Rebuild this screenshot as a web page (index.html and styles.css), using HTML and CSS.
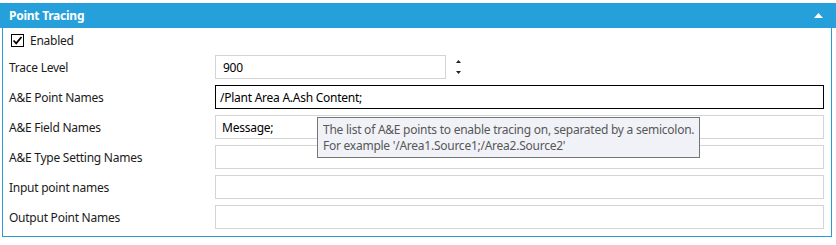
FILE: index.html
```html
<!DOCTYPE html>
<html>
<head>
<meta charset="utf-8">
<link rel="stylesheet" href="styles.css">
</head>
<body>
<div class="panel">
  <div class="panel-header">
    <span class="panel-title">Point Tracing</span>
    <svg class="collapse" width="9" height="5" viewBox="0 0 9 5"><path d="M0 5 L4.5 0 L9 5 Z" fill="#ffffff"/></svg>
  </div>
  <div class="panel-body">
    <label class="check-row">
      <span class="checkbox"><svg width="11" height="11" viewBox="0 0 11 11"><path d="M1.5 5.5 L4.2 8.3 L9.5 2" fill="none" stroke="#000" stroke-width="1.8"/></svg></span>
      <span class="check-label">Enabled</span>
    </label>
    <div class="form">
      <div class="label">Trace Level</div>
      <div class="field-wrap">
        <div class="field short">900</div>
        <div class="spinner">
          <svg width="5" height="3" viewBox="0 0 5 3"><path d="M0 3 L2.5 0 L5 3 Z" fill="#222"/></svg>
          <svg width="5" height="3" viewBox="0 0 5 3"><path d="M0 0 L2.5 3 L5 0 Z" fill="#222"/></svg>
        </div>
      </div>
      <div class="label">A&amp;E Point Names</div>
      <div class="field focused">/Plant Area A.Ash Content;</div>
      <div class="label">A&amp;E Field Names</div>
      <div class="field">Message;</div>
      <div class="label">A&amp;E Type Setting Names</div>
      <div class="field"></div>
      <div class="label">Input point names</div>
      <div class="field"></div>
      <div class="label">Output Point Names</div>
      <div class="field"></div>
    </div>
  </div>
  <div class="tooltip">The list of A&amp;E points to enable tracing on, separated by a semicolon.<br>For example '/Area1.Source1;/Area2.Source2'</div>
</div>
</body>
</html>
```
FILE: styles.css
```css
html, body {
  margin: 0;
  padding: 0;
  background: #ffffff;
}
body {
  font-family: "Segoe UI", "Noto Sans", "Open Sans", sans-serif;
  font-size: 12px;
  letter-spacing: -0.25px;
  color: #1b1b1b;
  padding-top: 3px;
  width: 836px;
}
.panel {
  position: relative;
}
.panel-header {
  height: 25px;
  background: #26a0da;
  display: flex;
  align-items: center;
  justify-content: space-between;
  padding: 0 13px 0 9px;
}
.panel-title {
  color: #ffffff;
  font-weight: bold;
  font-size: 12px;
}
.collapse {
  display: block;
}
.panel-body {
  margin-left: 2px;
  width: 830px;
  border: 1px solid #2a9bd3;
  border-top: none;
  padding: 0 7px 4px 6px;
  box-sizing: border-box;
}
.check-row {
  height: 24px;
  display: flex;
  align-items: center;
  padding-left: 2px;
}
.checkbox {
  width: 11px;
  height: 11px;
  border: 1px solid #000;
  display: flex;
  align-items: center;
  justify-content: center;
  margin-right: 6px;
}
.checkbox svg { display: block; }
.form {
  display: grid;
  grid-template-columns: 206px 1fr;
  grid-auto-rows: 30px;
  align-items: center;
}
.label {
  color: #1b1b1b;
}
.field {
  height: 24px;
  box-sizing: border-box;
  border: 1px solid #d4d4d4;
  padding: 0 6px;
  display: flex;
  align-items: center;
  color: #000;
}
.field.focused {
  border-color: #000;
  padding-left: 4px;
}
.field-wrap {
  display: flex;
  align-items: center;
}
.field.short {
  width: 231px;
  padding-left: 7px;
}
.spinner {
  display: flex;
  flex-direction: column;
  gap: 8px;
  margin-left: 10px;
}
.spinner svg { display: block; }
.tooltip {
  position: absolute;
  left: 317px;
  top: 114px;
  width: 383px;
  height: 41px;
  box-sizing: border-box;
  background: #f1f2f7;
  border: 1px solid #767676;
  color: #575757;
  padding: 4px 0 0 5px;
  line-height: 16px;
  white-space: nowrap;
}
```
